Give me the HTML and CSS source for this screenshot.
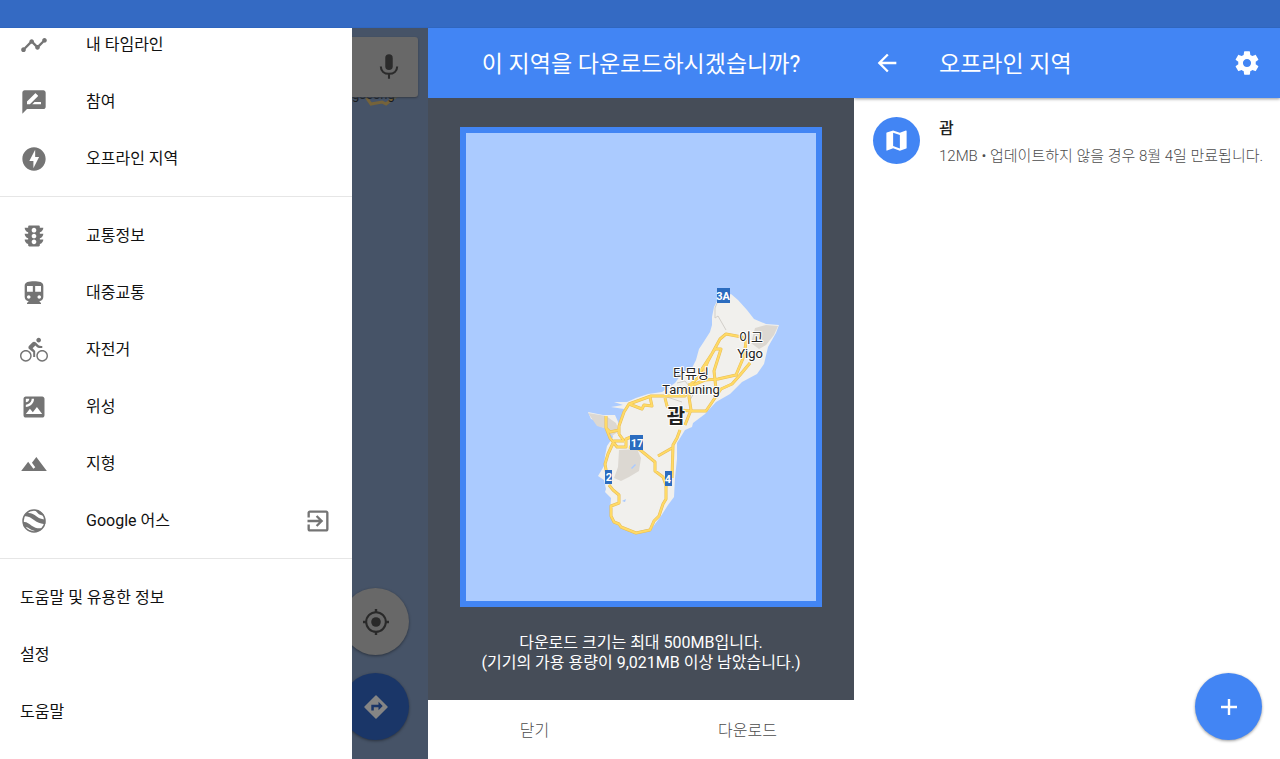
FILE: index.html
```html
<!DOCTYPE html>
<html lang="ko">
<head>
<meta charset="utf-8">
<meta name="viewport" content="width=device-width, initial-scale=1">
<title>오프라인 지역</title>
<link rel="stylesheet" href="styles.css">
</head>
<body>
<div class="status-bar"></div>
<main class="screens">
  <section class="screen menu-screen">
    <nav class="drawer">
      <ul class="group group-first">
        <li><a class="item" href="#"><svg class="icon" viewBox="0 0 24 24"><path d="M23 8c0 1.1-.9 2-2 2-.18 0-.35-.02-.51-.07l-3.56 3.55c.05.16.07.34.07.52 0 1.1-.9 2-2 2s-2-.9-2-2c0-.18.02-.36.07-.52l-2.55-2.55c-.16.05-.34.07-.52.07s-.36-.02-.52-.07l-4.55 4.56c.05.16.07.33.07.51 0 1.1-.9 2-2 2s-2-.9-2-2 .9-2 2-2c.18 0 .35.02.51.07l4.56-4.55C8.02 9.36 8 9.18 8 9c0-1.1.9-2 2-2s2 .9 2 2c0 .18-.02.36-.07.52l2.55 2.55c.16-.05.34-.07.52-.07s.36.02.52.07l3.55-3.56C19.02 8.35 19 8.18 19 8c0-1.1.9-2 2-2s2 .9 2 2z"/></svg><span>내 타임라인</span></a></li>
        <li><a class="item" href="#"><svg class="icon" viewBox="0 0 24 24"><path d="M20 2H4c-1.1 0-1.99.9-1.99 2L2 22l4-4h14c1.1 0 2-.9 2-2V4c0-1.1-.9-2-2-2zM6 14v-2.47l6.88-6.88c.2-.2.51-.2.71 0l1.77 1.77c.2.2.2.51 0 .71L8.47 14H6zm12 0h-7.5l2-2H18v2z"/></svg><span>참여</span></a></li>
        <li><a class="item" href="#"><svg class="icon" viewBox="0 0 24 24"><path d="M12 2.02c-5.51 0-9.98 4.47-9.98 9.98s4.47 9.98 9.98 9.98 9.98-4.47 9.98-9.98S17.51 2.02 12 2.02zM11.48 20v-6.26H8L13 4v6.26h3.35L11.48 20z"/></svg><span>오프라인 지역</span></a></li>
      </ul>
      <ul class="group">
        <li><a class="item" href="#"><svg class="icon" viewBox="0 0 24 24"><path d="M20 10h-3V8.86c1.72-.45 3-2 3-3.86h-3V4c0-.55-.45-1-1-1H8c-.55 0-1 .45-1 1v1H4c0 1.86 1.28 3.41 3 3.86V10H4c0 1.86 1.28 3.41 3 3.86V15H4c0 1.86 1.28 3.41 3 3.86V20c0 .55.45 1 1 1h8c.55 0 1-.45 1-1v-1.14c1.72-.45 3-2 3-3.86h-3v-1.14c1.72-.45 3-2 3-3.86zm-8 9c-1.11 0-2-.9-2-2s.89-2 2-2c1.1 0 2 .9 2 2s-.89 2-2 2zm0-5c-1.11 0-2-.9-2-2s.89-2 2-2c1.1 0 2 .9 2 2s-.89 2-2 2zm0-5c-1.11 0-2-.9-2-2 0-1.11.89-2 2-2 1.1 0 2 .89 2 2 0 1.1-.89 2-2 2z"/></svg><span>교통정보</span></a></li>
        <li><a class="item" href="#"><svg class="icon" viewBox="0 0 24 24"><path d="M12 2c-4.42 0-8 .5-8 4v9.500C4 17.430 5.570 19 7.500 19L6 20.500v1h12v-1L16.500 19c1.930 0 3.500-1.570 3.500-3.500V6c0-3.500-3.580-4-8-4zM7.500 17c-.83 0-1.500-.67-1.500-1.500S6.670 14 7.500 14s1.500.67 1.500 1.500S8.330 17 7.500 17zm3.500-6H6V6h5v5zm5.500 6c-.83 0-1.500-.67-1.500-1.500s.67-1.500 1.500-1.500 1.500.67 1.500 1.500-.67 1.500-1.500 1.500zm1.500-6h-5V6h5v5z"/></svg><span>대중교통</span></a></li>
        <li><a class="item" href="#"><svg class="icon" viewBox="0 0 24 24"><path d="M16 5.500c1.100 0 2-.9 2-2s-.9-2-2-2-2 .9-2 2 .9 2 2 2zM5 12c-2.800 0-5 2.200-5 5s2.200 5 5 5 5-2.200 5-5-2.200-5-5-5zm0 8.800c-2.100 0-3.800-1.700-3.800-3.800s1.700-3.800 3.800-3.800 3.800 1.700 3.800 3.800-1.700 3.800-3.800 3.800zm5.800-10.300l2.400-2.400.8.8c1.300 1.300 3 1.400 5.100 1.400V8.600c-1.500 0-2.700-.2-3.600-1.100l-1.900-1.900c-.5-.4-1-.6-1.600-.6s-1.100.2-1.400.6L7.800 8.400c-.4.4-.6.9-.6 1.400 0 .6.2 1.100.6 1.400L11.300 14v4H13v-5.200l-2.200-2.300zM19 12c-2.800 0-5 2.200-5 5s2.200 5 5 5 5-2.200 5-5-2.200-5-5-5zm0 8.800c-2.100 0-3.800-1.700-3.800-3.800s1.700-3.800 3.800-3.800 3.800 1.700 3.800 3.800-1.700 3.800-3.800 3.800z"/></svg><span>자전거</span></a></li>
        <li><a class="item" href="#"><svg class="icon" viewBox="0 0 24 24"><path d="M19 3H5c-1.100 0-2 .9-2 2v14c0 1.100.9 2 2 2h14c1.100 0 2-.9 2-2V5c0-1.100-.9-2-2-2zM5 5h3C8 6.650 6.660 8 5 8V5zM5 12v-2c2.760 0 5-2.250 5-5h2C12 8.860 8.870 12 5 12zm0 6l3.500-4.500 2.500 3L14.500 12l4.500 6H5z"/></svg><span>위성</span></a></li>
        <li><a class="item" href="#"><svg class="icon" viewBox="0 0 24 24"><path d="M14 6l-3.750 5 2.850 3.800-1.600 1.200C9.810 13.750 7 10 7 10l-6 8h22L14 6z"/></svg><span>지형</span></a></li>
        <li><a class="item" href="#"><svg class="icon" viewBox="0 0 24 24"><circle cx="12" cy="12" r="9.400" fill="none" stroke="currentColor" stroke-width="1.300"/><path d="M5 5.500C9 4.500 11.300 6 14.300 8.200c2.600 1.900 5 2.500 7.200 2.600l.3 3.600c-3.400.5-6.700-.9-9.500-3C9.700 9.400 7.500 7.800 3.600 7.700z"/><path d="M2.600 13c3-.6 4.800 1.200 7.400 3 2.900 2 6 2.700 9.400 1.900l-2.200 2.200c-3.200 1.200-6.200.1-9-1.500-1.900-1.100-3.200-1.700-4.600-1.600z"/><path d="M12.500 2.300c3.300.1 6 1.700 8 4.800-2 .3-3.800-.5-5.200-1.800-.9-.9-1.700-2-2.800-3z"/></svg><span>Google 어스</span><svg class="icon icon-exit" viewBox="0 0 24 24"><path d="M10.090 15.590L11.500 17l5-5-5-5-1.410 1.410L12.670 11H3v2h9.670l-2.580 2.590zM19 3H5c-1.110 0-2 .9-2 2v4h2V5h14v14H5v-4H3v4c0 1.100.89 2 2 2h14c1.100 0 2-.9 2-2V5c0-1.100-.9-2-2-2z"/></svg></a></li>
      </ul>
      <ul class="group">
        <li><a class="item" href="#">도움말 및 유용한 정보</a></li>
        <li><a class="item" href="#">설정</a></li>
        <li><a class="item" href="#">도움말</a></li>
      </ul>
    </nav>
    <div class="map-strip">
      <div class="strip-label"><svg class="strip-road" viewBox="0 0 76 30"><path d="M14 9l5 7 11-2 4 2 9-7 6-3" fill="none" stroke="#75633a" stroke-width="3"/></svg><span>gseong</span></div>
      <button class="search-card" aria-label="음성 검색"><svg class="mic" viewBox="0 0 24 24"><rect x="8.800" y="1" width="6.400" height="13.500" rx="3.200"/><path d="M5 11.500c0 4 3 6.300 7 6.300s7-2.300 7-6.300M12 17v5" fill="none" stroke="currentColor" stroke-width="1.800"/></svg></button>
      <div class="fabs">
        <button class="fab fab-locate" aria-label="내 위치"><svg viewBox="0 0 28 28"><circle cx="14" cy="14" r="9.800" fill="none" stroke="currentColor" stroke-width="2"/><circle cx="14" cy="14" r="4.800"/><path d="M14 1v4M14 23v4M1 14h4M23 14h4" stroke="currentColor" stroke-width="2.400"/></svg></button>
        <button class="fab fab-route" aria-label="길찾기"><svg viewBox="0 0 28 28"><path d="M14 3L25 14 14 25 3 14z" fill="#858585" stroke="#858585" stroke-width="1.500" stroke-linejoin="round"/><path d="M9.300 17.500v-5.800h7.200V8.800l4.200 4.200-4.200 4.200v-2.900h-4.700v3.200z" fill="#1a3568"/></svg></button>
      </div>
    </div>
  </section>

  <section class="screen confirm-screen">
    <header class="app-bar centered"><h1>이 지역을 다운로드하시겠습니까?</h1></header>
    <div class="confirm-body">
      <div class="map-frame">
        <svg class="map" viewBox="466 133 350 468" preserveAspectRatio="xMidYMid slice" role="img" aria-label="괌 지도">
          <path class="land" d="M717 301L714 307 712 317 712 325 710 332 703 343 699 349 696 360 692 368 683 372 675 383 662 392 648 394 636 398 627 402 614 402 623 405 611 407 624 409 621 418 619 424 615 415 603 415 588 412 591 419 597 421 599 426 610 430 613 437 607 446 605 456 604 466 598 476 604 480 606 489 605 492 611 498 610 513 614 522 622 528 635 532 652 528 661 516 668 505 674 497 675 478 677 459 677 443 685 430 692 427 693 423 705 414 716 402 730 394 742 382 757 374 764 364 768 347 776 333 779 325 766 324 754 319 747 310 738 300 731 294z"/>
          <path class="urban" d="M755 328l11-3 12 1-4 9-8 10-7 4-8-6z"/>
          <path class="urban" d="M588 413l18 3 10 7 3 8-7 5-5-7-10-3z"/>
          <path class="urban" d="M619 450l18-1 4 9-2 13-10 6-8 4-7-3 4-11z"/>
          <path d="M635 464l-4 4 1 1 4-4zM622 501l4-2-1 3z" fill="#a9caff"/>
          <path class="minor" d="M717 303l-2 5v10l3-2 8 14M677 383l8-2 4 5 7-5M667 397l15 5M690 400l5-9"/>
          <g class="road-edge"><path id="roads" d="M606 416v12l4 10 7 9h9v-8l5-2M606 428l4 4 9-2M619 434l5 7M624 441l-10 0-6 13-3 10 3 17M609 485l4 5 6 5v8l-8 3v10l3 6 5 2 2 3 15 6 14-3 4-9 5-5 4-12 3-5v-14l-3-8-8-6v-9l-16-13-10-2M619 434v-8l5-14 5-8 22-8h34l6-12 12-11 5-12 12-22 6-5 16 3 4 5-2 14-8 19-18 4-13 1-12 5-13 7M700 372l15-23h6l-7 22 2 18M750 363l-10 12-8 9-11 5-15 22-15 0-11-1M665 398l2 8 6 5M629 404l13 5 2-4 8 1-2-9M690 383l-1 14 2 13-6 15M680 430l-3 8-4 7-1 33M672 448l-14 8"/></g>
          <use href="#roads" class="road-core"/>
          <path class="shield" d="M717 288h13v15h-13zM630 435h13v15h-13zM605 470h7v14h-7zM665 471h7v15h-7z"/>
          <g class="shield-text"><text x="723" y="300">3A</text><text x="637" y="447">17</text><text x="609" y="481">2</text><text x="668" y="483">4</text></g>
          <g class="place"><text x="751" y="342">이고</text><text x="750" y="358">Yigo</text><text x="691" y="378">타뮤닝</text><text x="691" y="394">Tamuning</text></g>
          <text class="capital" x="676" y="424">괌</text>
        </svg>
      </div>
      <p class="note">다운로드 크기는 최대 500MB입니다.<br>(기기의 가용 용량이 9,021MB 이상 남았습니다.)</p>
    </div>
    <footer class="actions"><button>닫기</button><button>다운로드</button></footer>
  </section>

  <section class="screen offline-screen">
    <header class="app-bar raised">
      <button class="bar-button" aria-label="뒤로"><svg class="icon" viewBox="0 0 24 24"><path d="M20 11H7.830l5.590-5.590L12 4l-8 8 8 8 1.410-1.410L7.830 13H20v-2z"/></svg></button>
      <h2>오프라인 지역</h2>
      <button class="bar-button" aria-label="설정"><svg class="icon" viewBox="0 0 24 24"><path d="M19.430 12.980c.04-.32.07-.64.07-.98s-.03-.66-.07-.98l2.110-1.650c.19-.15.24-.42.12-.64l-2-3.460c-.12-.22-.39-.3-.61-.22l-2.490 1c-.52-.4-1.080-.73-1.690-.98l-.38-2.650C14.460 2.180 14.250 2 14 2h-4c-.25 0-.46.18-.49.42l-.38 2.650c-.61.25-1.170.59-1.690.98l-2.490-1c-.23-.09-.49 0-.61.22l-2 3.460c-.13.22-.07.49.12.64l2.110 1.650c-.04.32-.07.65-.07.98s.03.66.07.98l-2.110 1.650c-.19.15-.24.42-.12.64l2 3.460c.12.22.39.3.61.22l2.490-1c.52.4 1.080.73 1.690.98l.38 2.650c.03.24.24.42.49.42h4c.25 0 .46-.18.49-.42l.38-2.650c.61-.25 1.170-.59 1.690-.98l2.490 1c.23.09.49 0 .61-.22l2-3.460c.12-.22.07-.49-.12-.64l-2.110-1.650zM12 15.500c-1.930 0-3.500-1.570-3.500-3.500s1.570-3.500 3.500-3.500 3.500 1.570 3.500 3.500-1.570 3.500-3.500 3.500z"/></svg></button>
    </header>
    <a class="area" href="#">
      <span class="area-badge"><svg class="area-icon" viewBox="0 0 24 24"><path d="M20.500 3l-.16.03L15 5.100 9 3 3.360 4.900c-.21.07-.36.25-.36.48V20.500c0 .28.22.5.5.5l.16-.03L9 18.900l6 2.100 5.640-1.900c.21-.07.36-.25.36-.48V3.500c0-.28-.22-.5-.5-.5zM15 19l-6-2.110V5l6 2.110V19z"/></svg></span>
      <span class="area-text"><strong>괌</strong><span class="area-detail">12MB • 업데이트하지 않을 경우 8월 4일 만료됩니다.</span></span>
    </a>
    <button class="fab fab-add" aria-label="추가"><svg viewBox="0 0 28 28"><path d="M14 6v16M6 14h16" stroke="currentColor" stroke-width="2.400"/></svg></button>
  </section>
</main>
</body>
</html>
```
FILE: styles.css
```css
* { box-sizing: border-box; }

body {
  margin: 0;
  min-height: 100vh;
  display: flex;
  flex-direction: column;
  background: #fff;
  color: #111;
  font: 16px/20px Roboto, "Noto Sans CJK KR", sans-serif;
}

h1, h2, p, ul { margin: 0; padding: 0; font-weight: 400; }
li { list-style: none; }
a { color: inherit; text-decoration: none; }
button { border: 0; padding: 0; background: none; color: inherit; font: inherit; cursor: pointer; }
svg { display: block; fill: currentColor; }

.status-bar { height: 28px; background: #346ac3; border-bottom: 1px solid #2f66bf; }
.screens { flex: 1; display: grid; grid-template-columns: 428fr 426fr 426fr; }
.screen { display: flex; min-width: 0; }
.icon { width: 28px; height: 28px; flex: none; }

.drawer { flex: 0 0 352px; background: #fff; font-weight: 500; }
.group { padding: 10px 0 9px; }
.group + .group { border-top: 1px solid #e6e6e6; }
.group-first { padding-top: 0; }
.item { display: flex; align-items: center; gap: 38px; height: 57px; padding: 0 20px; }
.group-first li:first-child .item { height: 45px; padding-bottom: 12px; }
.item .icon { color: #747474; }
.item .icon-exit { margin-left: auto; }

.map-strip {
  position: relative;
  flex: 1;
  min-width: 0;
  display: flex;
  flex-direction: column;
  align-items: flex-end;
  overflow: hidden;
  background: #465367;
}
.search-card {
  position: relative;
  display: flex;
  align-items: center;
  justify-content: flex-end;
  width: 100px;
  height: 60px;
  margin: 9px 10px 0 0;
  padding-right: 15px;
  border-radius: 3px;
  background: #686868;
  color: #2b2b2b;
  box-shadow: 0 1px 2px #343b46;
}
.mic { width: 28px; height: 28px; }
.strip-label { position: absolute; left: 0; top: 57px; width: 76px; color: #191c20; font-size: 13px; }
.strip-road { position: absolute; left: 0; top: 3px; width: 76px; }
.strip-label span { position: relative; }
.fabs { display: flex; flex-direction: column; gap: 18px; margin: auto 19px 19px 0; }
.fab {
  width: 67px;
  height: 67px;
  border-radius: 50%;
  display: grid;
  place-items: center;
  box-shadow: 0 1px 3px rgba(0, 0, 0, .4);
}
.fab svg { width: 28px; height: 28px; }
.fab-locate { background: #686868; color: #292929; }
.fab-route { background: #1a3668; }

.app-bar {
  display: flex;
  align-items: center;
  height: 70px;
  background: #4285f4;
  color: #fff;
}
.app-bar h1, .app-bar h2 { padding-top: 3px; font-size: 23px; line-height: 32px; }
.centered { justify-content: center; }

.confirm-screen { flex-direction: column; background: #464d58; }
.confirm-body { flex: 1; display: flex; flex-direction: column; padding: 29px 32px 27px; }
.map-frame { flex: 1; display: flex; border: 6px solid #4285f4; background: #abcbff; }
.map { flex: 1; width: 100%; min-width: 0; }
.note { margin-top: 26px; color: #fff; text-align: center; white-space: nowrap; }
.actions { display: grid; grid-template-columns: 1fr 1fr; height: 59px; padding-top: 2px; background: #fff; color: #4c4c4c; font-weight: 300; }

.land { fill: #f1f0ed; }
.urban { fill: #dcd8d2; }
.minor { fill: none; stroke: #d2cfca; stroke-width: 1; }
.road-edge, .road-core { fill: none; stroke-linejoin: round; }
.road-edge { stroke: #e8bd55; stroke-width: 3; }
.road-core { stroke: #ffda66; stroke-width: 2; }
#roads { stroke: inherit; }
.shield { fill: #2b6cbf; }
.shield-text { fill: #fff; font-size: 11px; font-weight: 700; text-anchor: middle; }
.place, .capital { fill: #222; text-anchor: middle; paint-order: stroke; stroke: #fff; stroke-width: 2; stroke-linejoin: round; }
.place { font-size: 13px; }
.capital { font-size: 20px; font-weight: 700; }

.offline-screen { flex-direction: column; overflow: hidden; background: #fff; }
.raised { padding: 0 19px; box-shadow: 0 1px 3px rgba(0, 0, 0, .4); }
.raised h2 { flex: 1; padding-left: 38px; }
.area { display: flex; align-items: flex-start; gap: 19px; padding: 19px 0 0 19px; }
.area-badge { flex: none; display: grid; place-items: center; width: 47px; height: 47px; border-radius: 50%; background: #4285f4; color: #fff; }
.area-icon { width: 27px; height: 27px; }
.area-text { display: flex; flex-direction: column; gap: 7px; padding-top: 2px; white-space: nowrap; }
.area-text strong { color: #222; font-weight: 500; }
.area-detail { color: #4c4c4c; font-size: 15px; font-weight: 300; }
.fab-add { margin: auto 18px 19px auto; background: #4285f4; color: #fff; }
```
